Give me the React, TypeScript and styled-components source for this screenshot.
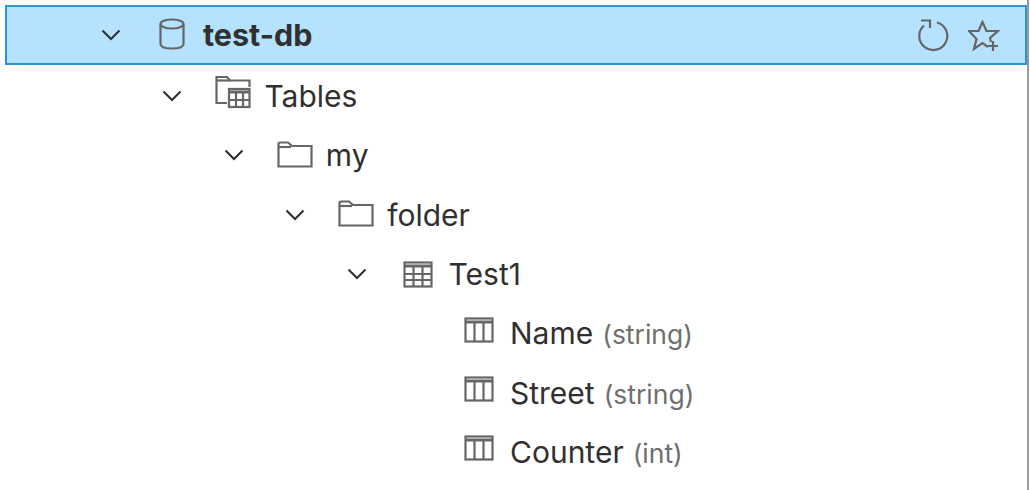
import React from 'react'
import styled, { createGlobalStyle } from 'styled-components'

const GlobalStyle = createGlobalStyle`
  html, body {
    margin: 0;
    padding: 0;
    background: #ffffff;
  }
`

const Tree = styled.div`
  width: 1029px;
  height: 490px;
  box-sizing: border-box;
  padding: 5px 0 0 5px;
  overflow: hidden;
  border-right: 2px solid #9a9a9a;
  font-family: Inter, "Noto Sans", sans-serif;
  color: #303030;
`

const Row = styled.div<{ $level: number; $selected?: boolean }>`
  display: flex;
  align-items: center;
  box-sizing: border-box;
  height: ${(p) => (p.$selected ? '60px' : '59.4px')};
  margin-bottom: ${(p) => (p.$selected ? '1.4px' : '0')};
  padding-left: ${(p) => 89 + p.$level * 61.4}px;
  padding-right: 25px;
  background: ${(p) => (p.$selected ? '#b5e2ff' : 'transparent')};
  border: 2px solid ${(p) => (p.$selected ? '#2b96d3' : 'transparent')};
`

const ChevronSlot = styled.span`
  width: 30px;
  height: 30px;
  margin-right: 31px;
  flex: none;
  display: flex;
  align-items: center;
  justify-content: center;

  svg {
    display: block;
  }
`

const IconSlot = styled.span<{ $lift: number }>`
  width: 36px;
  height: 36px;
  margin-right: 13px;
  margin-left: -3px;
  flex: none;
  display: flex;
  align-items: center;
  justify-content: center;
  position: relative;
  top: ${(p) => -p.$lift}px;

  svg {
    display: block;
  }
`

const Label = styled.span<{ $bold?: boolean }>`
  font-size: ${(p) => (p.$bold ? '30.5px' : '30px')};
  line-height: 36px;
  font-weight: ${(p) => (p.$bold ? 700 : 400)};
  white-space: nowrap;
`

const TypeHint = styled.span`
  font-size: 26.5px;
  color: #6f6f6f;
  margin-left: 9px;
`

const Actions = styled.div`
  margin-left: auto;
  margin-top: 2px;
  display: flex;
  align-items: center;
  gap: 18px;
`

const Chevron = () => (
  <svg width="20" height="12" viewBox="0 0 20 12" fill="none" stroke="#2e2e2e" strokeWidth="2">
    <path d="M1.5 1.5 L10 10 L18.5 1.5" />
  </svg>
)

const iconProps = {
  fill: 'none',
  stroke: '#666666',
  strokeWidth: 2.2,
}

const DatabaseIcon = () => (
  <svg width="26" height="32" viewBox="0 0 26 32" {...iconProps}>
    <ellipse cx="13" cy="6" rx="11.5" ry="4.5" />
    <path d="M1.5 6 V26 C1.5 29 6.5 30.5 13 30.5 C19.5 30.5 24.5 29 24.5 26 V6" />
  </svg>
)

const TablesIcon = () => (
  <svg width="36" height="34" viewBox="0 0 36 34" {...iconProps}>
    <path d="M12 28 H1.5 V2 H12 L15 5.5 H34.5 V12" />
    <path d="M1.5 5.5 H15" />
    <rect x="14" y="14" width="20.5" height="18" />
    <path d="M14 17 H34.5" strokeWidth="3" />
    <path d="M14 25 H34.5 M21 17 V32 M28 17 V32" />
  </svg>
)

const FolderIcon = () => (
  <svg width="36" height="27" viewBox="0 0 36 27" {...iconProps}>
    <path d="M1.5 3 C1.5 2 2 1.5 3 1.5 H11 L15 5 H34.5 V25.5 H1.5 Z" />
    <path d="M1.5 6 H14" />
  </svg>
)

const TableIcon = () => (
  <svg width="30" height="27" viewBox="0 0 30 27" {...iconProps}>
    <rect x="1.5" y="1.5" width="27" height="24" />
    <path d="M1.5 5 H28.5" strokeWidth="3" />
    <path d="M1.5 13 H28.5 M1.5 19 H28.5 M10.5 6 V25.5 M19.5 6 V25.5" />
  </svg>
)

const ColumnIcon = () => (
  <svg width="30" height="26" viewBox="0 0 30 26" {...iconProps}>
    <rect x="1.5" y="1.5" width="27" height="23" />
    <path d="M1.5 5 H28.5" strokeWidth="3" />
    <path d="M10.5 6 V24.5 M19.5 6 V24.5" />
  </svg>
)

const RefreshIcon = () => (
  <svg width="32" height="34" viewBox="0 0 32 34" {...iconProps}>
    <path d="M19 3.5 A14 14 0 1 1 6 6.5" />
    <path d="M3 1.5 H12 V9" />
  </svg>
)

const StarAddIcon = () => (
  <svg width="32" height="32" viewBox="0 0 32 32" {...iconProps}>
    <path d="M20 27 L14.5 23 L6 29 L8.5 19 L1 11 H10.5 L14.5 2 L18.5 11 H30 L22 18 L23 22" />
    <path d="M25 21 V31 M20 26 H30" />
  </svg>
)

interface I_NodeProps {
  level: number
  icon: React.ReactNode
  lift: number
  label: string
  hint?: string
  expandable?: boolean
}

const Node: React.FC<I_NodeProps> = ({ level, icon, lift, label, hint, expandable = true }) => (
  <Row $level={level}>
    <ChevronSlot>{expandable && <Chevron />}</ChevronSlot>
    <IconSlot $lift={lift}>{icon}</IconSlot>
    <Label>
      {label}
      {hint && <TypeHint>{hint}</TypeHint>}
    </Label>
  </Row>
)

const App: React.FC = () => {
  return (
    <>
      <GlobalStyle />
      <Tree>
        <Row $level={0} $selected>
          <ChevronSlot>
            <Chevron />
          </ChevronSlot>
          <IconSlot $lift={1}>
            <DatabaseIcon />
          </IconSlot>
          <Label $bold>test-db</Label>
          <Actions>
            <RefreshIcon />
            <StarAddIcon />
          </Actions>
        </Row>
        <Node level={1} icon={<TablesIcon />} lift={4} label="Tables" />
        <Node level={2} icon={<FolderIcon />} lift={1} label="my" />
        <Node level={3} icon={<FolderIcon />} lift={1} label="folder" />
        <Node level={4} icon={<TableIcon />} lift={0} label="Test1" />
        <Node level={5} icon={<ColumnIcon />} lift={4} label="Name" hint="(string)" expandable={false} />
        <Node level={5} icon={<ColumnIcon />} lift={4} label="Street" hint="(string)" expandable={false} />
        <Node level={5} icon={<ColumnIcon />} lift={4} label="Counter" hint="(int)" expandable={false} />
      </Tree>
    </>
  )
}

export default App
